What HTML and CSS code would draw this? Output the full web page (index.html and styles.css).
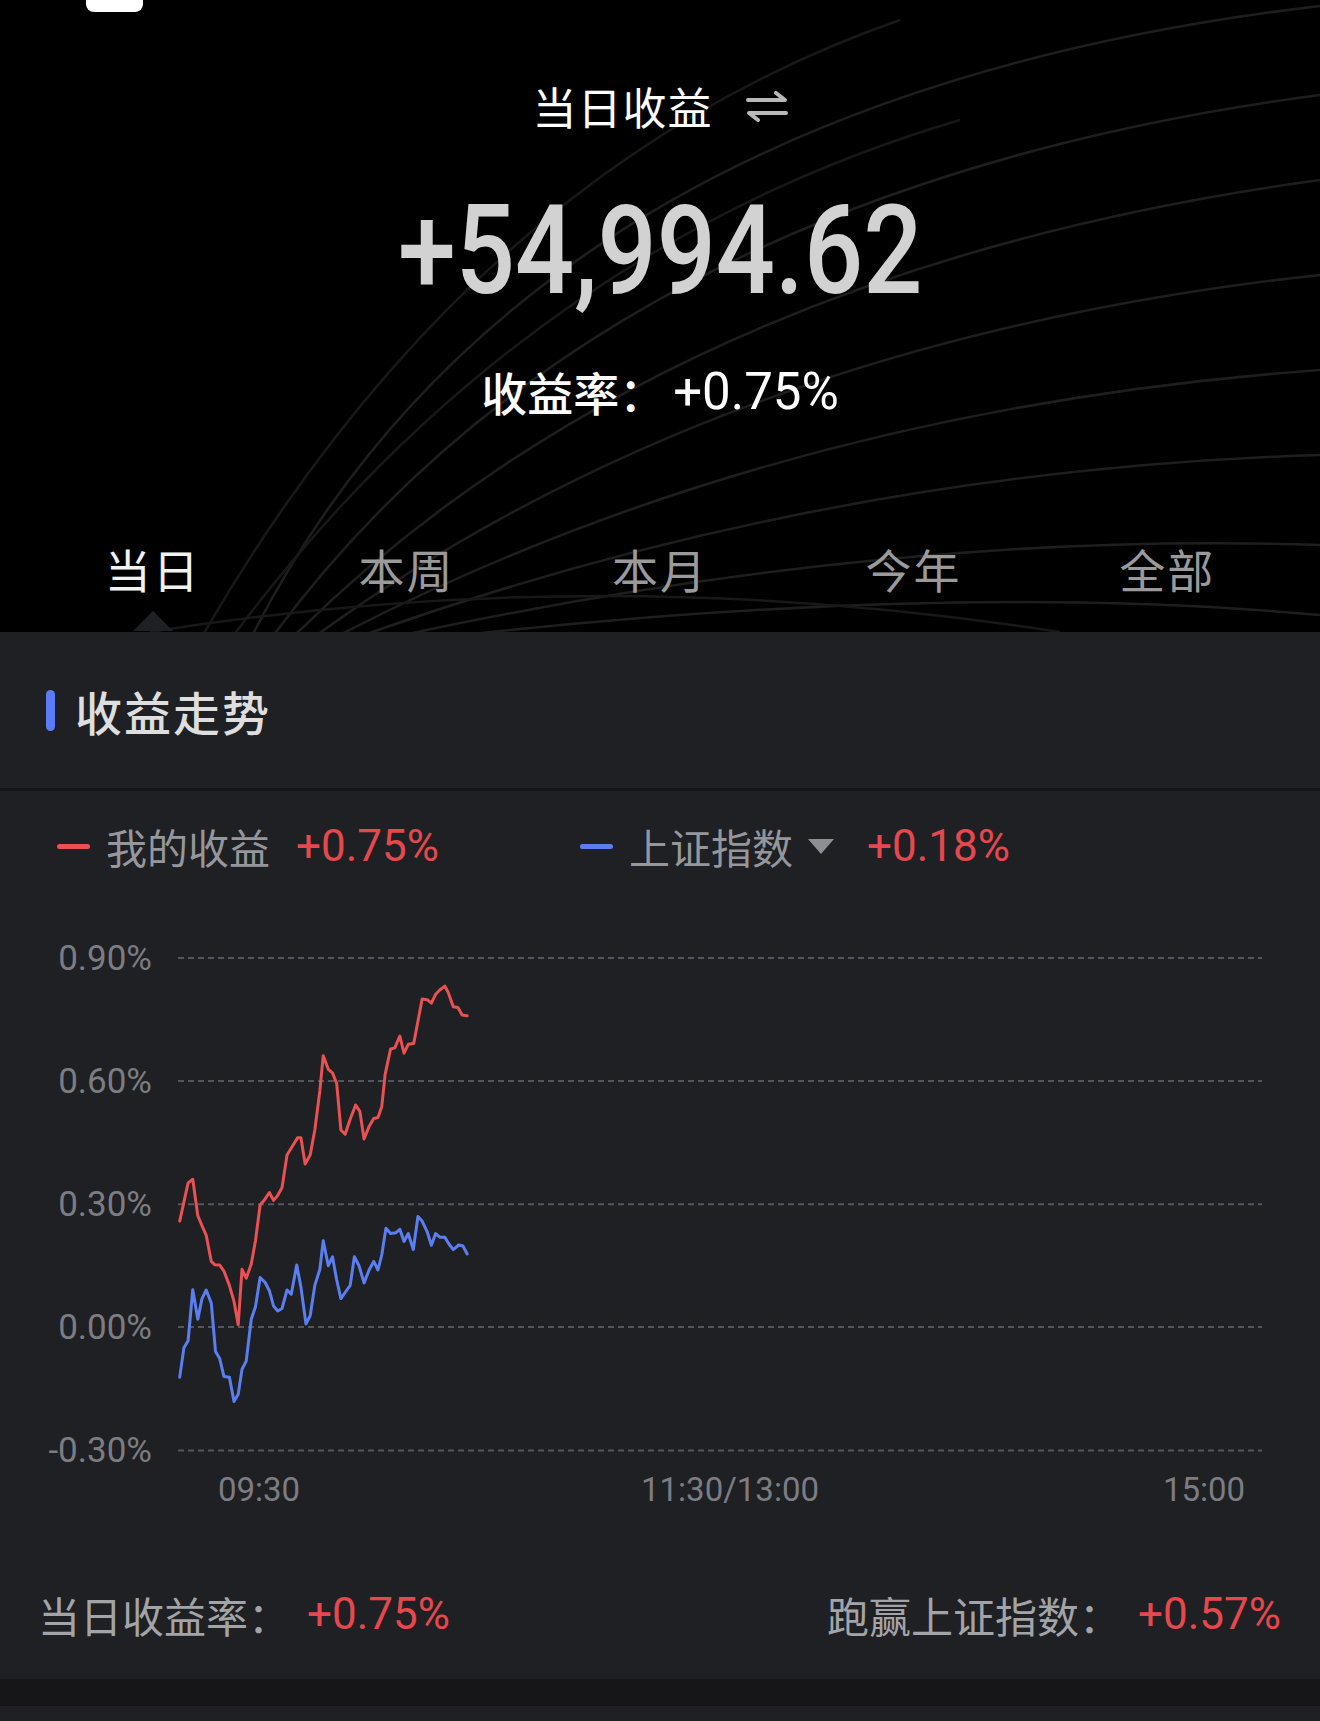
FILE: index.html
```html
<!DOCTYPE html>
<html lang="zh-CN">
<head>
<meta charset="utf-8">
<title>当日收益</title>
<link rel="stylesheet" href="styles.css">
</head>
<body>
<div class="page">
  <header class="hero">
    <svg class="arcs" viewBox="0 0 1320 632" preserveAspectRatio="none">
      <g fill="none" stroke="#1e1e1e" stroke-width="2.5">
        <path d="M250 640 Q520 100 1320 6"/>
        <path d="M270 640 Q600 190 1320 95"/>
        <path d="M290 640 Q660 270 1320 180"/>
        <path d="M310 640 Q720 340 1320 275"/>
        <path d="M330 640 Q770 410 1320 370"/>
        <path d="M350 640 Q820 470 1320 455"/>
        <path d="M380 640 Q880 530 1320 545"/>
        <path d="M420 640 Q930 580 1320 615"/>
      </g>
      <g fill="none" stroke="#181818" stroke-width="2.5">
        <path d="M200 640 Q470 170 900 20"/>
        <path d="M230 640 Q520 250 960 120"/>
        <path d="M150 632 Q600 560 1060 632"/>
      </g>
    </svg>
    <div class="pill"></div>
    <div class="title">
      <span>当日收益</span>
      <svg class="swap" viewBox="0 0 42 32">
        <path d="M2 9 H39 L30 2" fill="none" stroke="#b8b8b8" stroke-width="4" stroke-linecap="round" stroke-linejoin="round"/>
        <path d="M40 22 H3 L12 29" fill="none" stroke="#b8b8b8" stroke-width="4" stroke-linecap="round" stroke-linejoin="round"/>
      </svg>
    </div>
    <div class="amount"><span>+54,994.62</span></div>
    <div class="rate"><span class="cn">收益率：</span><span class="num">+0.75%</span></div>
    <nav class="tabs">
      <div class="tab active">当日</div>
      <div class="tab">本周</div>
      <div class="tab">本月</div>
      <div class="tab">今年</div>
      <div class="tab">全部</div>
    </nav>
  </header>

  <section class="panel">
    <div class="sec-head"><i class="bar"></i><span>收益走势</span></div>
    <div class="divider"></div>
    <div class="legend">
      <div class="item">
        <i class="dash red"></i><span class="lab">我的收益</span><span class="val">+0.75%</span>
      </div>
      <div class="item second">
        <i class="dash blue"></i><span class="lab">上证指数</span><i class="caret"></i><span class="val">+0.18%</span>
      </div>
    </div>
    <svg class="chart" viewBox="0 0 1320 650">
      <g stroke="#55565b" stroke-width="2" stroke-dasharray="6 4">
        <line x1="178" y1="77.9" x2="1262" y2="77.9"/>
        <line x1="178" y1="201.1" x2="1262" y2="201.1"/>
        <line x1="178" y1="324.3" x2="1262" y2="324.3"/>
        <line x1="178" y1="447.1" x2="1262" y2="447.1"/>
        <line x1="178" y1="570.4" x2="1262" y2="570.4"/>
      </g>
      <g class="ylab" text-anchor="end">
        <text x="152" y="90">0.90%</text>
        <text x="152" y="213">0.60%</text>
        <text x="152" y="336">0.30%</text>
        <text x="152" y="459">0.00%</text>
        <text x="152" y="582">-0.30%</text>
      </g>
      <g class="xlab" text-anchor="middle">
        <text x="259" y="621">09:30</text>
        <text x="730" y="621">11:30/13:00</text>
        <text x="1204" y="621">15:00</text>
      </g>
      <g transform="scale(0.42088 0.357143)" fill="none" stroke-linejoin="round" stroke-linecap="round">
        <polyline vector-effect="non-scaling-stroke" stroke="#5b7ff0" stroke-width="3" points="427,1392 437,1310 447,1290 458,1147 470,1230 480,1172 490,1148 502,1185 512,1320 522,1340 532,1390 545,1392 556,1460 566,1440 575,1370 585,1347 597,1230 607,1195 618,1113 630,1127 640,1150 650,1193 660,1207 670,1200 682,1148 692,1160 705,1078 715,1140 727,1243 737,1220 748,1135 760,1090 768,1010 780,1080 790,1055 800,1120 810,1172 820,1155 832,1135 842,1055 853,1080 865,1128 877,1092 888,1068 898,1092 907,1050 917,975 928,990 940,988 950,978 960,1012 970,990 982,1035 993,942 1003,955 1015,985 1025,1023 1035,990 1045,1000 1057,1000 1067,1020 1077,1035 1090,1022 1100,1025 1110,1047"/>
        <polyline vector-effect="non-scaling-stroke" stroke="#ea5152" stroke-width="3" points="427,955 447,848 458,838 470,940 480,968 490,995 502,1068 510,1077 522,1078 532,1095 545,1135 556,1180 566,1245 575,1090 585,1115 597,1075 607,1010 618,910 630,893 640,875 650,897 660,883 670,862 682,770 695,745 707,722 715,722 725,795 737,770 748,700 760,590 768,492 780,530 790,540 800,570 810,700 820,712 832,670 845,630 855,648 865,725 877,690 888,668 898,665 907,635 915,545 928,473 938,470 950,437 960,485 970,460 983,458 1003,333 1015,335 1025,345 1035,320 1045,308 1057,297 1065,315 1077,355 1088,357 1098,378 1110,380"/>
      </g>
    </svg>
    <div class="stats">
      <div class="stat"><span class="lab">当日收益率：</span><span class="val">+0.75%</span></div>
      <div class="stat"><span class="lab">跑赢上证指数：</span><span class="val">+0.57%</span></div>
    </div>
  </section>
  <div class="gap"></div>
  <div class="tail"></div>
</div>
</body>
</html>
```
FILE: styles.css
```css
* { box-sizing: border-box; }
html, body { margin: 0; padding: 0; background: #000; }
body {
  width: 1320px;
  font-family: Roboto, "Noto Sans CJK SC", sans-serif;
  color: #fff;
}
.page { width: 1320px; }

.hero {
  position: relative;
  height: 632px;
  padding-top: 76px;
  background: #000;
  overflow: hidden;
}
.arcs {
  position: absolute;
  left: 0; top: 0;
  width: 1320px; height: 632px;
}
.pill {
  position: absolute;
  left: 86px; top: -8px;
  width: 57px; height: 20px;
  border-radius: 8px;
  background: #fff;
}
.title {
  position: relative;
  height: 60px;
  display: flex;
  justify-content: center;
  align-items: center;
  gap: 33px;
  font-family: "Noto Sans CJK SC", sans-serif;
  font-size: 44px;
  letter-spacing: 1px;
  color: #fff;
}
.swap { width: 42px; height: 32px; margin-top: 2px; }

.amount {
  position: relative;
  margin-top: 45px;
  height: 140px;
  line-height: 140px;
  text-align: center;
  font-family: Roboto, sans-serif;
  font-weight: 500;
  font-size: 124px;
  color: #d2d2d2;
}
.amount span { display: inline-block; transform: scaleX(0.84); }

.rate {
  position: relative;
  margin-top: 40px;
  height: 60px;
  display: flex;
  justify-content: center;
  align-items: center;
  color: #fff;
}
.rate .cn { font-family: "Noto Sans CJK SC", sans-serif; font-size: 46px; font-weight: 500; }
.rate .num { font-family: Roboto, sans-serif; font-size: 51px; margin-left: 8px; }

.tabs {
  position: relative;
  margin-top: 107px;
  display: grid;
  grid-template-columns: repeat(5, 1fr);
  padding: 0 26px;
  height: 103px;
}
.tab {
  position: relative;
  text-align: center;
  height: 80px;
  line-height: 80px;
  font-family: "Noto Sans CJK SC", sans-serif;
  font-size: 46px;
  letter-spacing: 2px;
  color: #9a9a9a;
}
.tab.active { color: #f2f2f2; }
.tab.active::after {
  content: "";
  position: absolute;
  left: 50%;
  bottom: -23px;
  margin-left: -20px;
  border-left: 20px solid transparent;
  border-right: 20px solid transparent;
  border-bottom: 20px solid #1f2024;
}

.panel { background: #1f2024; }
.sec-head {
  height: 156px;
  display: flex;
  align-items: center;
  padding-left: 46px;
  font-family: "Noto Sans CJK SC", sans-serif;
  font-size: 47px;
  font-weight: 500;
  color: #dedede;
  letter-spacing: 2px;
}
.sec-head .bar {
  display: block;
  width: 9px; height: 41px;
  border-radius: 5px;
  background: #5b7cf6;
  margin-right: 20px;
}
.divider { height: 3px; background: #141517; }

.legend {
  height: 89px;
  padding-top: 39px;
  padding-left: 57px;
  display: flex;
  align-items: flex-start;
}
.legend .item {
  display: flex;
  align-items: center;
  height: 32px;
}
.legend .item.second { margin-left: 141px; }
.legend .dash {
  display: block;
  width: 33px; height: 5px;
  border-radius: 3px;
  margin-right: 16px;
}
.dash.red { background: #ea5152; }
.dash.blue { background: #5b7ff0; }
.legend .lab {
  font-family: "Noto Sans CJK SC", sans-serif;
  font-size: 41px;
  color: #96979c;
}
.legend .val {
  font-family: Roboto, sans-serif;
  font-size: 44px;
  color: #e5484d;
  margin-left: 26px;
}
.legend .caret {
  display: block;
  margin-left: 15px;
  margin-right: 7px;
  width: 0; height: 0;
  border-left: 13px solid transparent;
  border-right: 13px solid transparent;
  border-top: 15px solid #8e8f94;
}
.chart { display: block; width: 1320px; height: 650px; }
.ylab text { font-family: Roboto, sans-serif; font-size: 35px; fill: #7c7d82; }
.xlab text { font-family: Roboto, sans-serif; font-size: 33px; fill: #7c7d82; }

.stats {
  height: 149px;
  padding: 60px 39px 0 38px;
  display: flex;
  justify-content: space-between;
  align-items: flex-start;
}
.stat { display: flex; align-items: center; height: 48px; }
.stat .lab {
  font-family: "Noto Sans CJK SC", sans-serif;
  font-size: 42px;
  color: #a3a4a8;
}
.stat .val {
  font-family: Roboto, sans-serif;
  font-size: 44px;
  color: #e5484d;
  margin-left: 17px;
}
.gap { height: 27px; background: #161618; }
.tail { height: 15px; background: #1f2024; }
```
